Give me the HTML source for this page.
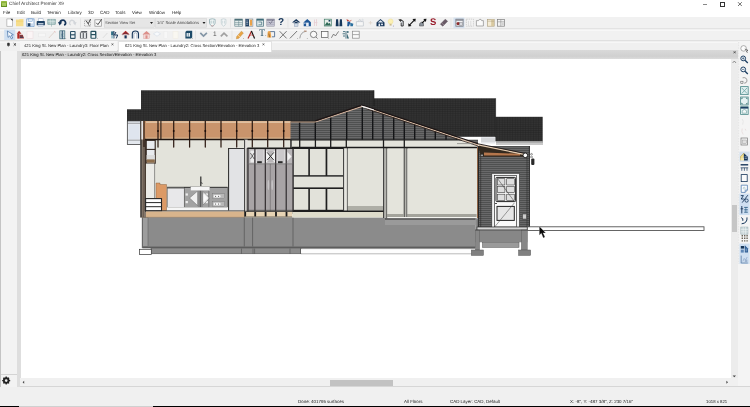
<!DOCTYPE html>
<html><head><meta charset="utf-8"><title>Chief Architect Premier X9</title>
<style>
html,body{margin:0;padding:0;}
body{width:750px;height:407px;overflow:hidden;background:#fff;position:relative;font-family:"Liberation Sans",sans-serif;}
.abs{position:absolute;}
.t{position:absolute;white-space:nowrap;line-height:1;color:#333;will-change:transform;text-rendering:geometricPrecision;}
#house{position:absolute;left:0;top:0;}
</style></head><body>

<div class="abs" style="left:0px;top:0px;width:750px;height:17px;background:#fff;"></div>
<div class="abs" style="left:0px;top:17.4px;width:750px;height:12px;background:#f1f1f1;"></div>
<div class="abs" style="left:0px;top:29px;width:750px;height:11.5px;background:#f1f1f1;"></div>
<div class="abs" style="left:0px;top:27.9px;width:750px;height:0.8px;background:#e3e3e3;"></div>
<div class="abs" style="left:0px;top:29.6px;width:750px;height:1.2px;background:#f7f7f7;"></div>
<div class="abs" style="left:0px;top:40.5px;width:750px;height:10px;background:#f0f0f0;"></div>
<div class="abs" style="left:0px;top:40.1px;width:750px;height:0.8px;background:#e0e0e0;"></div>
<div class="abs" style="left:0px;top:41.8px;width:20px;height:1.2px;background:#f7f7f7;"></div>
<div class="abs" style="left:270px;top:41.8px;width:480px;height:1.2px;background:#f7f7f7;"></div>
<div class="abs" style="left:20.6px;top:50px;width:717.6px;height:9.3px;background:linear-gradient(#d9d9d9,#d0d0d0 70%,#dcdcdc);"></div>
<div class="abs" style="left:0px;top:50.5px;width:17.5px;height:337px;background:#f3f3f3;"></div>
<div class="abs" style="left:17.3px;top:50.5px;width:3.4px;height:336px;background:#dedede;"></div>
<div class="abs" style="left:0.8px;top:373.8px;width:16.5px;height:0.6px;background:#d4d4d4;"></div>
<div class="abs" style="left:0px;top:50.5px;width:0.8px;height:337px;background:#c4c4c4;"></div>
<div class="abs" style="left:738px;top:40.9px;width:12px;height:346px;background:#f4f4f4;"></div>
<div class="abs" style="left:730.8px;top:59.3px;width:7.2px;height:319px;background:#ececec;"></div>
<div class="abs" style="left:732px;top:205px;width:5px;height:27px;background:#c6c6c6;"></div>
<div class="abs" style="left:20px;top:378px;width:718px;height:8.5px;background:#f0f0f0;"></div>
<div class="abs" style="left:330px;top:379.9px;width:63.4px;height:6.3px;background:#c2c2c2;"></div>
<div class="abs" style="left:0px;top:386.5px;width:750px;height:20px;background:#f0f0f0;"></div>
<div class="abs" style="left:20px;top:386.3px;width:730px;height:0.7px;background:#d6d6d6;"></div>
<div class="abs" style="left:0px;top:406px;width:19px;height:1px;background:#000;"></div>
<div class="abs" style="left:153px;top:406px;width:597px;height:1px;background:#000;"></div>
<div class="abs" style="left:19px;top:406px;width:134px;height:1px;background:#d0d0d0;"></div>
<div class="abs" style="left:1px;top:1.2px;width:6px;height:6px;background:linear-gradient(#9bbf45,#5d8a1f);border-radius:0.5px;"></div>
<div class="abs" style="left:2.4px;top:3.2px;width:3.2px;height:2.6px;background:#a9cc5e;"></div>
<div class="t" style="left:9.3px;top:2.0px;font-size:4.7px;color:#333;">Chief Architect Premier X9</div>
<div class="abs" style="left:703px;top:4.1px;width:3.6px;height:0.6px;background:#888;"></div>
<div class="abs" style="left:720.2px;top:2.3px;width:2.8px;height:2.8px;border:0.7px solid #333;"></div>
<div class="t" style="left:3.3px;top:10.8px;font-size:4.5px;color:#222;">File</div>
<div class="t" style="left:16.6px;top:10.8px;font-size:4.5px;color:#222;">Edit</div>
<div class="t" style="left:30.6px;top:10.8px;font-size:4.5px;color:#222;">Build</div>
<div class="t" style="left:47.4px;top:10.8px;font-size:4.5px;color:#222;">Terrain</div>
<div class="t" style="left:67.8px;top:10.8px;font-size:4.5px;color:#222;">Library</div>
<div class="t" style="left:88.4px;top:10.8px;font-size:4.5px;color:#222;">3D</div>
<div class="t" style="left:99.6px;top:10.8px;font-size:4.5px;color:#222;">CAD</div>
<div class="t" style="left:115.2px;top:10.8px;font-size:4.5px;color:#222;">Tools</div>
<div class="t" style="left:132.2px;top:10.8px;font-size:4.5px;color:#222;">View</div>
<div class="t" style="left:148.6px;top:10.8px;font-size:4.5px;color:#222;">Window</div>
<div class="t" style="left:172.2px;top:10.8px;font-size:4.5px;color:#222;">Help</div>
<div class="abs" style="left:20px;top:41px;width:97px;height:9.5px;background:#f6f6f6;"></div>
<div class="abs" style="left:117.5px;top:41px;width:152px;height:9.7px;background:#ffffff;border-left:0.5px solid #e2e2e2;border-right:0.5px solid #e2e2e2;border-top:0.5px solid #e2e2e2;"></div>
<div class="t" style="left:24px;top:43.9px;font-size:4.2px;color:#222;">421 King St. New Plan - Laundry3: Floor Plan</div>
<div class="t" style="left:110.5px;top:43.2px;font-size:5px;color:#222;">&#215;</div>
<div class="t" style="left:125px;top:43.9px;font-size:4.2px;color:#222;">621 King St. New Plan - Laundry2: Cross Section/Elevation - Elevation 3</div>
<div class="t" style="left:262.4px;top:43.2px;font-size:5px;color:#222;">&#215;</div>
<div class="t" style="left:22px;top:52.7px;font-size:4.2px;color:#111;">621 King St. New Plan - Laundry2: Cross Section/Elevation - Elevation 3</div>
<div class="t" style="left:732.6px;top:51.2px;font-size:5.5px;color:#222;">&#215;</div>
<div class="t" style="left:298px;top:400.2px;font-size:4.45px;color:#222;">Done: 401795 surfaces</div>
<div class="t" style="left:404px;top:400.2px;font-size:4.45px;color:#222;">All Floors</div>
<div class="t" style="left:450px;top:400.2px;font-size:4.45px;color:#222;">CAD Layer: CAD, Default</div>
<div class="t" style="left:570px;top:400.2px;font-size:4.47px;color:#222;">X: -8", Y: -487 3/8", Z: 230 7/16"</div>
<div class="t" style="left:706px;top:400.2px;font-size:4.3px;color:#222;">1018 x 821</div>
<svg id="house" width="750" height="407" viewBox="0 0 750 407">
<defs>
<pattern id="roof" width="2.6" height="2.1" patternUnits="userSpaceOnUse">
<rect width="2.6" height="2.1" fill="#323232"/>
<path d="M0 0.2H2.6M0.2 0V2.1" stroke="#212121" stroke-width="0.5" fill="none"/>
</pattern>
<pattern id="siding" width="4" height="2" patternUnits="userSpaceOnUse">
<rect width="4" height="2" fill="#656667"/>
<path d="M0 0.4H4" stroke="#38393a" stroke-width="0.8"/><path d="M0 1H4" stroke="#78797a" stroke-width="0.35"/>
</pattern>
</defs>
<rect x="127.00" y="109.30" width="15.00" height="11.70" fill="url(#roof)" />
<rect x="141.00" y="90.30" width="233.00" height="46.70" fill="url(#roof)" />
<rect x="373.50" y="98.30" width="122.10" height="38.50" fill="url(#roof)" />
<rect x="495.30" y="116.80" width="47.40" height="24.60" fill="url(#roof)" />
<line x1="374.00" y1="90.30" x2="374.00" y2="106.00" stroke="#151515" stroke-width="0.6" />
<line x1="495.60" y1="98.30" x2="495.60" y2="141.00" stroke="#151515" stroke-width="0.6" />
<rect x="496.00" y="141.40" width="47.00" height="3.60" fill="#c9c9c9" />
<rect x="496.00" y="141.40" width="47.00" height="1.00" fill="#8a8a8a" />
<rect x="144.00" y="121.00" width="147.00" height="18.60" fill="#c9946c" />
<rect x="144.00" y="121.20" width="147.00" height="1.80" fill="#e0c0a0" />
<rect x="144.00" y="137.60" width="147.00" height="1.40" fill="#dcb894" />
<rect x="127.30" y="120.90" width="13.70" height="23.50" fill="#e4e8ee" stroke="#262626" stroke-width="0.7" />
<line x1="127.50" y1="123.30" x2="141.00" y2="123.30" stroke="#555" stroke-width="0.5" />
<line x1="127.50" y1="140.20" x2="141.00" y2="140.20" stroke="#555" stroke-width="0.5" />
<rect x="129.00" y="125.00" width="10.00" height="14.00" fill="#dfe5ee" />
<rect x="142.30" y="217.50" width="333.20" height="29.10" fill="#8b8b8b" />
<rect x="142.30" y="217.50" width="5.70" height="29.10" fill="#9d9d9d" />
<rect x="385.00" y="219.30" width="90.50" height="5.70" fill="#9a9a9a" />
<line x1="142.30" y1="217.50" x2="142.30" y2="248.00" stroke="#3a3a3a" stroke-width="0.7" />
<line x1="148.00" y1="217.50" x2="148.00" y2="246.00" stroke="#5a5a5a" stroke-width="0.5" />
<line x1="244.30" y1="217.50" x2="244.30" y2="246.60" stroke="#4a4a4a" stroke-width="0.6" />
<line x1="252.60" y1="217.50" x2="252.60" y2="246.60" stroke="#4a4a4a" stroke-width="0.6" />
<line x1="293.00" y1="217.50" x2="293.00" y2="246.60" stroke="#4a4a4a" stroke-width="0.6" />
<rect x="142.30" y="246.30" width="333.20" height="2.00" fill="#5c5c5c" />
<rect x="151.00" y="248.60" width="150.00" height="5.20" fill="#8c8c8c" stroke="#444" stroke-width="0.5" />
<rect x="301.00" y="248.80" width="174.00" height="4.80" fill="#fdfdfd" />
<line x1="301.00" y1="248.60" x2="475.00" y2="248.60" stroke="#444" stroke-width="0.5" />
<line x1="301.00" y1="253.80" x2="475.00" y2="253.80" stroke="#777" stroke-width="0.5" />
<line x1="241.50" y1="248.60" x2="241.50" y2="253.80" stroke="#444" stroke-width="0.5" />
<line x1="253.00" y1="248.60" x2="253.00" y2="253.80" stroke="#444" stroke-width="0.5" />
<line x1="254.60" y1="248.60" x2="254.60" y2="253.80" stroke="#444" stroke-width="0.5" />
<line x1="290.00" y1="248.60" x2="290.00" y2="253.80" stroke="#444" stroke-width="0.5" />
<line x1="300.50" y1="248.60" x2="300.50" y2="253.80" stroke="#444" stroke-width="0.5" />
<rect x="139.50" y="249.30" width="11.80" height="5.10" fill="#fff" stroke="#333" stroke-width="0.7" />
<rect x="146.00" y="139.60" width="332.00" height="71.40" fill="#e3e3db" />
<rect x="387.00" y="205.00" width="91.00" height="13.00" fill="#e3e3db" />
<rect x="140.40" y="120.90" width="5.60" height="96.60" fill="#85786c" />
<line x1="141.00" y1="120.90" x2="141.00" y2="217.50" stroke="#262626" stroke-width="1.1" />
<line x1="145.20" y1="139.00" x2="145.20" y2="211.00" stroke="#2e221a" stroke-width="1.0" />
<line x1="143.30" y1="121.00" x2="143.30" y2="217.00" stroke="#4a3c32" stroke-width="0.5" />
<rect x="141.60" y="121.00" width="4.40" height="18.40" fill="#c9946c" />
<rect x="141.40" y="121.00" width="1.80" height="18.40" fill="#e4e4e6" />
<line x1="144.00" y1="121.00" x2="144.00" y2="147.00" stroke="#2e1c14" stroke-width="1.3" />
<line x1="158.00" y1="121.00" x2="158.00" y2="147.00" stroke="#2e1c14" stroke-width="1.25" stroke-linecap="round"/>
<circle cx="158" cy="131" r="0.95" fill="#1a0c08"/>
<line x1="173.70" y1="121.00" x2="173.70" y2="147.00" stroke="#2e1c14" stroke-width="1.25" stroke-linecap="round"/>
<circle cx="173.7" cy="131" r="0.95" fill="#1a0c08"/>
<line x1="189.60" y1="121.00" x2="189.60" y2="147.00" stroke="#2e1c14" stroke-width="1.25" stroke-linecap="round"/>
<circle cx="189.6" cy="131" r="0.95" fill="#1a0c08"/>
<line x1="205.30" y1="121.00" x2="205.30" y2="147.00" stroke="#2e1c14" stroke-width="1.25" stroke-linecap="round"/>
<circle cx="205.3" cy="131" r="0.95" fill="#1a0c08"/>
<line x1="221.00" y1="121.00" x2="221.00" y2="147.00" stroke="#2e1c14" stroke-width="1.25" stroke-linecap="round"/>
<circle cx="221" cy="131" r="0.95" fill="#1a0c08"/>
<line x1="236.70" y1="121.00" x2="236.70" y2="147.00" stroke="#2e1c14" stroke-width="1.25" stroke-linecap="round"/>
<circle cx="236.7" cy="131" r="0.95" fill="#1a0c08"/>
<line x1="252.30" y1="121.00" x2="252.30" y2="147.00" stroke="#2e1c14" stroke-width="1.25" stroke-linecap="round"/>
<circle cx="252.3" cy="131" r="0.95" fill="#1a0c08"/>
<line x1="267.70" y1="121.00" x2="267.70" y2="147.00" stroke="#2e1c14" stroke-width="1.25" stroke-linecap="round"/>
<circle cx="267.7" cy="131" r="0.95" fill="#1a0c08"/>
<line x1="283.70" y1="121.00" x2="283.70" y2="147.00" stroke="#2e1c14" stroke-width="1.25" stroke-linecap="round"/>
<circle cx="283.7" cy="131" r="0.95" fill="#1a0c08"/>
<line x1="160.90" y1="120.90" x2="160.90" y2="139.50" stroke="#33241c" stroke-width="1.2" />
<line x1="145.00" y1="139.50" x2="291.00" y2="139.50" stroke="#1e1612" stroke-width="1.5" />
<rect x="146.20" y="140.30" width="9.00" height="22.90" fill="#e9ebee" stroke="#2a1c14" stroke-width="1.1" />
<line x1="146.20" y1="149.40" x2="155.20" y2="149.40" stroke="#2a1c14" stroke-width="1.0" />
<rect x="146.60" y="155.00" width="8.20" height="5.00" fill="#dcdcdc" />
<rect x="146.70" y="159.40" width="8.00" height="3.30" fill="#8e6e4c" />
<rect x="146.20" y="163.60" width="8.10" height="34.40" fill="#ebebe7" />
<line x1="154.60" y1="163.60" x2="154.60" y2="198.00" stroke="#555" stroke-width="0.6" />
<polygon points="156.00,183.00 160.00,183.00 160.00,184.50 166.50,184.50 166.50,210.50 156.00,210.50" fill="#dc9a66" stroke="#7a5030" stroke-width="0.4" />
<rect x="145.60" y="198.60" width="15.90" height="12.20" fill="#fff" stroke="#262626" stroke-width="1.1" />
<line x1="145.60" y1="202.60" x2="161.50" y2="202.60" stroke="#262626" stroke-width="1.0" />
<line x1="145.60" y1="206.70" x2="161.50" y2="206.70" stroke="#262626" stroke-width="1.0" />
<rect x="167.40" y="188.20" width="16.80" height="19.20" fill="#e8e8ea" stroke="#555" stroke-width="0.5" />
<rect x="184.40" y="187.60" width="43.20" height="19.80" fill="#a2a2a2" stroke="#444" stroke-width="0.5" />
<rect x="185.60" y="193.40" width="2.30" height="2.20" fill="#ededed" />
<rect x="185.60" y="201.00" width="2.30" height="2.20" fill="#ededed" />
<rect x="205.60" y="193.40" width="2.30" height="2.20" fill="#ededed" />
<rect x="205.60" y="201.00" width="2.30" height="2.20" fill="#ededed" />
<polygon points="189.60,198.00 197.60,191.00 197.60,205.60" fill="#efefef" stroke="#555" stroke-width="0.4" />
<polygon points="209.60,198.00 203.00,191.60 203.00,205.00" fill="#efefef" stroke="#555" stroke-width="0.4" />
<rect x="197.80" y="190.00" width="5.00" height="17.00" fill="#8a8a8a" />
<line x1="200.40" y1="188.00" x2="200.40" y2="207.00" stroke="#444" stroke-width="0.7" />
<polygon points="203.40,194.00 207.40,198.00 203.40,202.00" fill="#fafafa" />
<line x1="208.80" y1="187.60" x2="208.80" y2="207.40" stroke="#555" stroke-width="0.5" />
<rect x="212.60" y="193.80" width="12.00" height="4.80" fill="#b8b8b8" stroke="#666" stroke-width="0.3" />
<rect x="213.60" y="194.90" width="7.00" height="2.60" fill="#f4f4f4" rx="1.2"/>
<circle cx="215.6" cy="196.2" r="0.55" fill="#333"/>
<circle cx="218.6" cy="196.2" r="0.55" fill="#333"/>
<rect x="212.60" y="201.60" width="12.00" height="4.80" fill="#b8b8b8" stroke="#666" stroke-width="0.3" />
<rect x="213.60" y="202.70" width="7.00" height="2.60" fill="#f4f4f4" rx="1.2"/>
<circle cx="215.6" cy="204.0" r="0.55" fill="#333"/>
<circle cx="218.6" cy="204.0" r="0.55" fill="#333"/>
<rect x="167.00" y="207.40" width="77.00" height="3.10" fill="#f6f6f6" />
<line x1="167.00" y1="187.30" x2="227.60" y2="187.30" stroke="#2a2a2a" stroke-width="0.9" />
<rect x="190.70" y="186.80" width="19.10" height="3.80" fill="#f6f6f6" stroke="#999" stroke-width="0.3" />
<line x1="200.80" y1="176.50" x2="200.80" y2="186.00" stroke="#2a2a2a" stroke-width="1.2" />
<line x1="200.80" y1="182.60" x2="202.60" y2="183.40" stroke="#2a2a2a" stroke-width="0.8" />
<rect x="228.60" y="148.50" width="15.40" height="62.00" fill="#e2e3e5" />
<line x1="228.60" y1="148.20" x2="228.60" y2="210.50" stroke="#262626" stroke-width="1.0" />
<line x1="228.20" y1="148.50" x2="244.50" y2="148.50" stroke="#262626" stroke-width="0.9" />
<rect x="244.20" y="139.60" width="3.40" height="77.40" fill="#e2e0dc" />
<line x1="244.60" y1="139.60" x2="244.60" y2="217.00" stroke="#262626" stroke-width="0.9" />
<line x1="247.20" y1="148.00" x2="247.20" y2="217.00" stroke="#262626" stroke-width="0.9" />
<rect x="247.40" y="148.00" width="45.80" height="66.00" fill="#a8a4a6" />
<rect x="248.00" y="148.60" width="45.00" height="15.20" fill="#b9b6b8" />
<rect x="250.40" y="150.50" width="3.80" height="12.00" fill="#ececec" />
<line x1="250.40" y1="153.00" x2="254.20" y2="159.00" stroke="#3a3a3a" stroke-width="0.7" />
<line x1="250.40" y1="159.00" x2="254.20" y2="153.00" stroke="#3a3a3a" stroke-width="0.7" />
<rect x="255.60" y="150.00" width="9.00" height="13.20" fill="#f0f0f0" />
<rect x="256.50" y="150.00" width="7.20" height="13.20" fill="#cbc9cb" />
<rect x="257.20" y="161.20" width="4.60" height="2.00" fill="#2a2a2a" />
<rect x="276.40" y="150.00" width="9.10" height="13.20" fill="#f0f0f0" />
<rect x="277.30" y="150.00" width="7.30" height="13.20" fill="#cbc9cb" />
<rect x="278.00" y="161.20" width="4.60" height="2.00" fill="#2a2a2a" />
<rect x="266.00" y="150.50" width="9.00" height="12.00" fill="#f2f2f2" />
<polygon points="266.60,150.50 274.40,150.50 270.50,155.60" fill="#b9b6b8" />
<polygon points="266.60,162.50 274.40,162.50 270.50,157.00" fill="#b9b6b8" />
<line x1="267.20" y1="152.40" x2="273.80" y2="160.20" stroke="#2a2a2a" stroke-width="1.0" />
<line x1="267.20" y1="160.20" x2="273.80" y2="152.40" stroke="#2a2a2a" stroke-width="1.0" />
<polygon points="287.40,152.00 291.60,156.50 287.40,161.00" fill="#f2f2f2" />
<line x1="248.00" y1="148.00" x2="248.00" y2="214.00" stroke="#262224" stroke-width="1.1" />
<line x1="254.90" y1="148.00" x2="254.90" y2="214.00" stroke="#262224" stroke-width="1.1" />
<line x1="265.30" y1="148.00" x2="265.30" y2="214.00" stroke="#262224" stroke-width="1.1" />
<line x1="275.70" y1="148.00" x2="275.70" y2="214.00" stroke="#262224" stroke-width="1.1" />
<line x1="286.20" y1="148.00" x2="286.20" y2="214.00" stroke="#262224" stroke-width="1.1" />
<line x1="293.00" y1="148.00" x2="293.00" y2="214.00" stroke="#262224" stroke-width="1.1" />
<line x1="270.30" y1="164.00" x2="270.30" y2="212.00" stroke="#6a6668" stroke-width="0.6" />
<line x1="247.40" y1="148.20" x2="293.40" y2="148.20" stroke="#1c1c1c" stroke-width="1.4" />
<line x1="247.40" y1="163.90" x2="293.40" y2="163.90" stroke="#6a6668" stroke-width="0.6" />
<line x1="247.40" y1="210.30" x2="293.40" y2="210.30" stroke="#4a4a4a" stroke-width="0.7" />
<ellipse cx="268.4" cy="185" rx="0.8" ry="5" fill="#c6c4c6"/>
<ellipse cx="272.2" cy="185" rx="0.8" ry="5" fill="#c6c4c6"/>
<line x1="145.00" y1="211.00" x2="244.50" y2="211.00" stroke="#262626" stroke-width="1.0" />
<rect x="146.00" y="211.50" width="98.40" height="5.80" fill="#d8b48c" />
<line x1="142.00" y1="217.40" x2="244.40" y2="217.40" stroke="#5a4a3a" stroke-width="0.5" />
<rect x="244.40" y="211.50" width="47.90" height="5.80" fill="#e6d3b4" />
<rect x="244.30" y="212.00" width="1.80" height="4.50" fill="#1a1a1a" />
<rect x="254.30" y="212.00" width="1.80" height="4.50" fill="#1a1a1a" />
<rect x="264.70" y="212.00" width="1.80" height="4.50" fill="#1a1a1a" />
<rect x="275.10" y="212.00" width="1.80" height="4.50" fill="#1a1a1a" />
<rect x="285.60" y="212.00" width="1.80" height="4.50" fill="#1a1a1a" />
<line x1="244.00" y1="211.30" x2="292.30" y2="211.30" stroke="#262626" stroke-width="0.9" />
<line x1="244.00" y1="217.00" x2="292.30" y2="217.00" stroke="#3a3a3a" stroke-width="0.7" />
<rect x="293.20" y="148.00" width="50.40" height="63.00" fill="#1f1f1f" />
<rect x="293.80" y="149.00" width="14.50" height="26.20" fill="#e2e2da" />
<rect x="293.80" y="189.00" width="14.50" height="20.80" fill="#e2e2da" />
<rect x="309.90" y="149.00" width="15.70" height="26.20" fill="#e2e2da" />
<rect x="309.90" y="189.00" width="15.70" height="20.80" fill="#e2e2da" />
<rect x="327.30" y="149.00" width="15.90" height="26.20" fill="#e2e2da" />
<rect x="327.30" y="189.00" width="15.90" height="20.80" fill="#e2e2da" />
<rect x="293.80" y="176.60" width="49.40" height="10.80" fill="#e2e2da" />
<rect x="343.80" y="148.60" width="3.40" height="62.40" fill="#e6e6e0" />
<line x1="343.60" y1="148.00" x2="343.60" y2="211.00" stroke="#262626" stroke-width="0.8" />
<line x1="347.40" y1="148.00" x2="347.40" y2="211.00" stroke="#262626" stroke-width="0.8" />
<rect x="347.80" y="148.60" width="35.80" height="57.40" fill="#e3e3db" />
<rect x="347.80" y="206.00" width="35.80" height="4.60" fill="#aeaea6" />
<rect x="292.30" y="211.60" width="91.70" height="5.70" fill="#dedccb" />
<line x1="292.30" y1="211.20" x2="384.00" y2="211.20" stroke="#1e1e1e" stroke-width="1.4" />
<rect x="383.60" y="140.00" width="3.40" height="78.00" fill="#b4b4ae" />
<line x1="383.60" y1="140.00" x2="383.60" y2="218.00" stroke="#262626" stroke-width="0.9" />
<line x1="386.90" y1="140.00" x2="386.90" y2="218.00" stroke="#262626" stroke-width="0.8" />
<rect x="387.30" y="148.60" width="16.70" height="65.40" fill="#e4e4dc" />
<rect x="404.00" y="148.00" width="3.20" height="70.00" fill="#b4b4ae" />
<line x1="404.20" y1="140.00" x2="404.20" y2="218.00" stroke="#262626" stroke-width="0.8" />
<line x1="407.00" y1="140.00" x2="407.00" y2="218.00" stroke="#262626" stroke-width="0.8" />
<rect x="407.40" y="148.60" width="69.20" height="65.40" fill="#e4e4dc" />
<rect x="387.30" y="214.00" width="16.70" height="3.00" fill="#a4a49c" />
<rect x="407.40" y="214.00" width="69.20" height="3.00" fill="#a4a49c" />
<rect x="387.30" y="217.00" width="89.30" height="1.30" fill="#f4f4f0" />
<line x1="385.00" y1="219.00" x2="476.60" y2="219.00" stroke="#262626" stroke-width="0.9" />
<line x1="291.00" y1="139.60" x2="291.00" y2="148.00" stroke="#262626" stroke-width="1.0" />
<line x1="299.70" y1="139.60" x2="299.70" y2="148.00" stroke="#262626" stroke-width="1.0" />
<line x1="315.40" y1="139.60" x2="315.40" y2="148.00" stroke="#262626" stroke-width="1.0" />
<line x1="330.70" y1="139.60" x2="330.70" y2="148.00" stroke="#262626" stroke-width="1.0" />
<line x1="346.30" y1="139.60" x2="346.30" y2="148.00" stroke="#262626" stroke-width="1.0" />
<polygon points="290.50,121.80 315.30,121.80 362.00,106.00 478.00,144.60 478.00,139.80 290.50,139.80" fill="url(#siding)" />
<rect x="290.50" y="121.80" width="187.50" height="18.00" fill="none" />
<line x1="299.60" y1="122.00" x2="299.60" y2="139.80" stroke="#141517" stroke-width="1.4" />
<line x1="315.30" y1="121.80" x2="315.30" y2="139.80" stroke="#141517" stroke-width="1.4" />
<line x1="330.70" y1="116.59" x2="330.70" y2="139.80" stroke="#141517" stroke-width="1.4" />
<line x1="346.70" y1="111.18" x2="346.70" y2="139.80" stroke="#141517" stroke-width="1.4" />
<line x1="362.30" y1="106.10" x2="362.30" y2="139.80" stroke="#141517" stroke-width="1.4" />
<line x1="372.70" y1="109.62" x2="372.70" y2="139.80" stroke="#141517" stroke-width="1.4" />
<line x1="383.00" y1="113.10" x2="383.00" y2="139.80" stroke="#141517" stroke-width="1.4" />
<line x1="393.70" y1="116.71" x2="393.70" y2="139.80" stroke="#141517" stroke-width="1.4" />
<line x1="404.30" y1="120.29" x2="404.30" y2="139.80" stroke="#141517" stroke-width="1.4" />
<line x1="414.70" y1="123.81" x2="414.70" y2="139.80" stroke="#141517" stroke-width="1.4" />
<line x1="425.00" y1="127.29" x2="425.00" y2="139.80" stroke="#141517" stroke-width="1.4" />
<line x1="435.30" y1="130.77" x2="435.30" y2="139.80" stroke="#141517" stroke-width="1.4" />
<line x1="446.00" y1="134.38" x2="446.00" y2="139.80" stroke="#141517" stroke-width="1.4" />
<line x1="456.50" y1="137.93" x2="456.50" y2="139.80" stroke="#141517" stroke-width="1.4" />
<polygon points="290.50,139.90 462.00,139.90 478.00,145.00 478.00,147.20 290.50,147.20" fill="#e3e3db" />
<line x1="291.00" y1="139.80" x2="291.00" y2="148.00" stroke="#1c1c1c" stroke-width="1.3" />
<line x1="299.70" y1="139.80" x2="299.70" y2="148.00" stroke="#1c1c1c" stroke-width="1.3" />
<line x1="315.40" y1="139.80" x2="315.40" y2="148.00" stroke="#1c1c1c" stroke-width="1.3" />
<line x1="330.70" y1="139.80" x2="330.70" y2="148.00" stroke="#1c1c1c" stroke-width="1.3" />
<line x1="346.30" y1="139.80" x2="346.30" y2="148.00" stroke="#1c1c1c" stroke-width="1.3" />
<line x1="383.50" y1="139.80" x2="383.50" y2="148.00" stroke="#1c1c1c" stroke-width="1.3" />
<line x1="404.30" y1="139.80" x2="404.30" y2="148.00" stroke="#1c1c1c" stroke-width="1.3" />
<line x1="290.50" y1="139.80" x2="462.00" y2="139.80" stroke="#1a1a1a" stroke-width="1.2" />
<line x1="292.00" y1="147.60" x2="478.00" y2="147.60" stroke="#1c1c1c" stroke-width="1.5" />
<line x1="290.50" y1="121.90" x2="315.30" y2="121.90" stroke="#c9a58a" stroke-width="1.2" />
<line x1="290.50" y1="121.00" x2="315.30" y2="121.00" stroke="#1c1c1c" stroke-width="0.7" />
<line x1="315.30" y1="122.00" x2="362.00" y2="106.30" stroke="#d2b29c" stroke-width="1.3" />
<line x1="315.30" y1="120.90" x2="362.00" y2="105.10" stroke="#1c1414" stroke-width="1.2" />
<line x1="362.00" y1="106.20" x2="478.00" y2="144.80" stroke="#dcc0a8" stroke-width="1.3" />
<line x1="362.00" y1="105.10" x2="478.00" y2="143.70" stroke="#1c1414" stroke-width="1.2" />
<line x1="366.00" y1="108.60" x2="478.00" y2="146.00" stroke="#2e201a" stroke-width="0.8" />
<polygon points="361.00,105.60 365.00,106.60 374.00,109.60 374.00,110.60 362.00,107.00" fill="#f4f4f4" />
<line x1="473.40" y1="143.60" x2="457.00" y2="143.60" stroke="#8a8a86" stroke-width="0.8" />
<rect x="481.00" y="137.00" width="14.40" height="6.50" fill="#e4e6ea" />
<line x1="481.00" y1="139.00" x2="495.40" y2="139.00" stroke="#999" stroke-width="0.4" />
<line x1="481.00" y1="141.00" x2="495.40" y2="141.00" stroke="#999" stroke-width="0.4" />
<rect x="478.30" y="146.00" width="51.30" height="83.00" fill="url(#siding)" />
<line x1="478.30" y1="146.00" x2="478.30" y2="229.00" stroke="#1e1e1e" stroke-width="0.9" />
<line x1="529.40" y1="146.00" x2="529.40" y2="229.00" stroke="#1e1e1e" stroke-width="0.9" />
<line x1="480.70" y1="156.00" x2="480.70" y2="229.00" stroke="#2a2a2a" stroke-width="0.6" />
<line x1="527.00" y1="156.00" x2="527.00" y2="229.00" stroke="#2a2a2a" stroke-width="0.6" />
<rect x="477.00" y="147.00" width="1.00" height="71.00" fill="#a87450" />
<polygon points="479.00,145.00 525.00,154.20 525.00,156.80 481.00,156.80 479.00,150.00" fill="#33291f" />
<polygon points="484.00,152.50 520.00,153.80 520.00,155.60 484.00,155.60" fill="#b5764c" />
<line x1="478.00" y1="144.80" x2="525.00" y2="154.40" stroke="#e6cdb2" stroke-width="1.5" />
<line x1="478.00" y1="143.80" x2="525.00" y2="153.40" stroke="#1c1414" stroke-width="0.9" />
<circle cx="525.3" cy="155.3" r="2.3" fill="#fff" stroke="#1a1a1a" stroke-width="0.9"/>
<circle cx="482" cy="155.3" r="1.1" fill="#ddd" stroke="#1a1a1a" stroke-width="0.5"/>
<rect x="531.20" y="158.50" width="3.20" height="6.50" fill="#2a2a2a" rx="1"/>
<line x1="530.00" y1="157.00" x2="533.00" y2="157.00" stroke="#333" stroke-width="0.7" />
<circle cx="531.5" cy="154.3" r="0.9" fill="#fff" stroke="#333" stroke-width="0.5"/>
<rect x="491.80" y="173.40" width="27.60" height="53.80" fill="#f2f2f2" stroke="#333" stroke-width="0.6" />
<rect x="494.60" y="175.60" width="22.00" height="51.40" fill="#fafafa" stroke="#333" stroke-width="0.7" />
<rect x="496.00" y="177.40" width="19.60" height="24.20" fill="#fbfbfb" stroke="#222" stroke-width="1.0" rx="0.8"/>
<rect x="497.30" y="178.70" width="7.60" height="6.30" fill="#dedede" stroke="#3a3a3a" stroke-width="0.6" />
<rect x="497.30" y="186.60" width="7.60" height="6.00" fill="#dedede" stroke="#3a3a3a" stroke-width="0.6" />
<rect x="497.30" y="194.20" width="7.60" height="6.10" fill="#dedede" stroke="#3a3a3a" stroke-width="0.6" />
<rect x="506.70" y="178.70" width="7.60" height="6.30" fill="#dedede" stroke="#3a3a3a" stroke-width="0.6" />
<rect x="506.70" y="186.60" width="7.60" height="6.00" fill="#dedede" stroke="#3a3a3a" stroke-width="0.6" />
<rect x="506.70" y="194.20" width="7.60" height="6.10" fill="#dedede" stroke="#3a3a3a" stroke-width="0.6" />
<rect x="497.00" y="206.40" width="17.30" height="14.00" fill="#e6e6e6" stroke="#222" stroke-width="1.0" />
<line x1="497.50" y1="178.50" x2="514.00" y2="201.00" stroke="#333" stroke-width="0.5" />
<line x1="514.30" y1="203.00" x2="494.60" y2="227.00" stroke="#444" stroke-width="0.5" />
<line x1="495.00" y1="203.50" x2="497.00" y2="203.50" stroke="#222" stroke-width="0.8" />
<rect x="522.50" y="214.00" width="4.00" height="5.00" fill="#ccc" stroke="#333" stroke-width="0.5" />
<rect x="475.40" y="218.50" width="3.20" height="11.70" fill="#8a8a8a" />
<line x1="478.30" y1="146.00" x2="478.30" y2="229.00" stroke="#1e1e1e" stroke-width="0.9" />
<rect x="477.00" y="227.00" width="50.30" height="3.20" fill="#d4d4d4" stroke="#333" stroke-width="0.7" />
<rect x="527.30" y="226.80" width="176.70" height="3.70" fill="#fff" stroke="#4a4a4a" stroke-width="0.85" />
<rect x="475.40" y="230.00" width="51.90" height="12.30" fill="#878787" />
<rect x="475.40" y="230.00" width="4.20" height="20.00" fill="#878787" stroke="#555" stroke-width="0.4" />
<rect x="521.30" y="230.00" width="6.00" height="20.00" fill="#878787" stroke="#555" stroke-width="0.4" />
<rect x="482.50" y="242.30" width="36.50" height="5.10" fill="#9a9a9a" stroke="#555" stroke-width="0.5" />
<rect x="471.30" y="250.00" width="12.10" height="5.40" fill="#808080" stroke="#555" stroke-width="0.5" />
<rect x="518.60" y="250.00" width="12.00" height="5.40" fill="#808080" stroke="#555" stroke-width="0.5" />
<line x1="475.40" y1="230.00" x2="527.30" y2="230.00" stroke="#333" stroke-width="0.7" />
<polygon points="539.30,226.30 539.30,235.20 541.30,233.30 543.30,237.90 545.00,237.10 543.10,232.90 545.80,232.90" fill="#0a0a0a" stroke="#fff" stroke-width="0.25" />
</svg>
<svg id="icons" width="750" height="407" viewBox="0 0 750 407" style="position:absolute;left:0;top:0">
<g transform="translate(6.5,18.6)" opacity="1.0"><path d="M0.3 0.3H4.2L6 2V7.8H0.3Z" fill="#fff" stroke="#9a9a9a" stroke-width="0.6"/><path d="M4 0.2L6.2 2.3V0.2Z" fill="#222"/></g>
<g transform="translate(16,18.6)" opacity="1.0"><path d="M0 1H3L3.6 0.3H7.4V7.6H0Z" fill="#f6dd8c"/><path d="M0 2.6H7.4" stroke="#ecc95e" stroke-width="0.5"/></g>
<g transform="translate(26.5,18.6)" opacity="1.0"><rect x="0.3" y="0.3" width="7.2" height="7.4" fill="#fff" stroke="#5b8bc4" stroke-width="0.7"/><rect x="1.8" y="0.3" width="4" height="2.6" fill="#dfe9f5" stroke="#5b8bc4" stroke-width="0.4"/><rect x="1.2" y="4.6" width="2.8" height="3" fill="#1d3f63"/><rect x="4.4" y="4.8" width="2.4" height="2.8" fill="#c9d9ee"/></g>
<g transform="translate(36.5,18.6)" opacity="1.0"><rect x="1.8" y="0.2" width="4.8" height="3" fill="#fff" stroke="#7c93b5" stroke-width="0.4"/><path d="M0.2 3.2Q0.2 2.4 1 2.4H7.6Q8.4 2.4 8.4 3.2V6.6H0.2Z" fill="#1d3f63"/><rect x="1.6" y="4.6" width="5.4" height="1.2" fill="#dfe6f0"/><rect x="1.5" y="6.4" width="5.6" height="1.4" fill="#e8edf5" stroke="#7c93b5" stroke-width="0.3"/></g>
<g transform="translate(47.5,18.6)" opacity="1.0"><rect x="0.3" y="0.6" width="7.6" height="5.2" fill="#a9c3c3" stroke="#6d9393" stroke-width="0.5"/><path d="M2.8 0.6V5.8M5.4 0.6V5.8M0.3 3H7.9" stroke="#e6f0f0" stroke-width="0.5"/><path d="M4 5.8V8" stroke="#8aa" stroke-width="0.6"/></g>
<g transform="translate(58,18.6)" opacity="1.0"><path d="M2.3 5.2A2.7 2.7 0 1 1 6.2 6.6" fill="none" stroke="#17365a" stroke-width="1.7"/><path d="M0 3.4L4.2 3.8L1.6 7Z" fill="#17365a"/></g>
<g transform="translate(69,18.6)" opacity="1.0"><path d="M5.4 5.2A2.5 2.5 0 1 0 1.8 6.4" fill="none" stroke="#d3d6da" stroke-width="1.3"/><path d="M7.6 3.4L3.8 3.8L6.2 6.8Z" fill="#d3d6da"/></g>
<path d="M80.5 18.5V27.5" stroke="#dcdcdc" stroke-width="0.6"/>
<g transform="translate(84,18.6)" opacity="1.0"><rect x="0.5" y="1.5" width="6" height="6" fill="none" stroke="#888" stroke-width="0.6" stroke-dasharray="1.2 0.8"/><path d="M2 2L4.2 5.2L6.6 0.4" fill="none" stroke="#333" stroke-width="0.9"/><path d="M4.2 5.2L5.5 7.6" stroke="#555" stroke-width="0.7"/></g>
<g transform="translate(94.5,18.6)" opacity="1.0"><rect x="0.4" y="1.2" width="6.4" height="6.4" fill="#fafafa" stroke="#8a8a8a" stroke-width="0.7"/><path d="M1.8 4.2L3.4 6L7.2 0.6" fill="none" stroke="#333" stroke-width="0.9"/></g>
<rect x="104.2" y="18.6" width="50" height="8.6" fill="#e6e6e6" stroke="#cfcfcf" stroke-width="0.5"/>
<path d="M150 22L153 22L151.5 24Z" fill="#222"/>
<rect x="155.6" y="18.6" width="51" height="8.6" fill="#e6e6e6" stroke="#cfcfcf" stroke-width="0.5"/>
<path d="M202.5 22L205.5 22L204 24Z" fill="#222"/>
<g transform="translate(208.5,18.6)" opacity="1.0"><path d="M1 0.8Q3.7 -0.4 6.6 0.8V4.6Q5.6 7.2 3.8 7.8Q2 7.2 1 4.6Z" fill="#f4f8f8" stroke="#7fa1a6" stroke-width="0.7"/><path d="M2.6 2V5M4.8 2V5" stroke="#7fa1a6" stroke-width="0.6"/><path d="M2.6 7.2L5 7.2" stroke="#c77" stroke-width="0.5"/></g>
<g transform="translate(220.5,18.6)" opacity="1.0"><path d="M0.8 0.8Q3 -0.2 5.4 0.8V4.6Q4.6 7 3.1 7.6Q1.6 7 0.8 4.6Z" fill="#f6f8f9" stroke="#b9c9cd" stroke-width="0.7"/><path d="M2.2 2V5M4 2V5" stroke="#b9c9cd" stroke-width="0.6"/></g>
<path d="M230.5 18.5V27.5" stroke="#dcdcdc" stroke-width="0.6"/>
<g transform="translate(234.5,18.6)" opacity="1.0"><rect x="0.3" y="0.4" width="7.6" height="7.2" fill="#e4ecec" stroke="#5d7f86" stroke-width="0.6"/><rect x="0.3" y="0.4" width="7.6" height="1.6" fill="#4d6f78"/><path d="M0.3 4H7.9M0.3 5.8H7.9M4.2 2V7.6" stroke="#5d7f86" stroke-width="0.5"/></g>
<g transform="translate(245,18.6)" opacity="1.0"><rect x="0.3" y="0.4" width="7.6" height="7.2" fill="#f2ead8" stroke="#5d6f86" stroke-width="0.5"/><rect x="0.6" y="0.6" width="3.4" height="7" fill="#1d3f63"/><rect x="5" y="1.2" width="2" height="5.8" fill="#e9a24a"/><path d="M1.2 2.4H3.2M1.2 4H3.2M1.2 5.6H3.2" stroke="#dfe6f0" stroke-width="0.6"/></g>
<g transform="translate(256.5,18.6)" opacity="1.0"><rect x="0.3" y="0.4" width="6.6" height="7.2" fill="#e4ecec" stroke="#3d6a78" stroke-width="0.7"/><rect x="0.3" y="0.4" width="6.6" height="1.6" fill="#3d6a78"/><path d="M2 3.4H5.2V6.2H2" fill="none" stroke="#3d6a78" stroke-width="0.7"/></g>
<g transform="translate(266.5,18.6)" opacity="1.0"><rect x="0.3" y="0.4" width="7.6" height="7.2" fill="#c9c9d6" stroke="#8a8a9a" stroke-width="0.5"/><rect x="0.3" y="0.4" width="7.6" height="1.8" fill="#8a8a9c"/><path d="M0.3 4H7.9M0.3 5.8H7.9" stroke="#9a9aac" stroke-width="0.5"/><path d="M2.4 3.2L4 5L6.4 1.4" stroke="#6a6a80" stroke-width="0.7" fill="none"/></g>
<path d="M288 18.5V27.5" stroke="#dcdcdc" stroke-width="0.6"/>
<g transform="translate(292,18.6)" opacity="1.0"><path d="M0 4L4.2 0.4L8.4 4H6.6L4.2 2.4L1.8 4Z" fill="#17365a"/><path d="M1.4 4.6L4.2 2.8L7 4.6Z" fill="#17365a"/><rect x="2.4" y="5.2" width="3.6" height="2.4" fill="#cfd9e6" stroke="#6e86a4" stroke-width="0.4"/></g>
<g transform="translate(303.5,18.6)" opacity="1.0"><path d="M0.2 3.6L3.8 0.4L7.4 3.6V7.6H0.2Z" fill="#1f5796"/><rect x="2.6" y="4" width="2.6" height="3.6" fill="#e8eef6"/><rect x="0.8" y="3.8" width="1.2" height="1.6" fill="#bcd0ea"/></g>
<g transform="translate(313.5,18.6)" opacity="1.0"><path d="M1 1V7.4M3 0.6V7.4M0.4 4H4" stroke="#e6cdd2" stroke-width="0.8"/></g>
<g transform="translate(324,18.6)" opacity="1.0"><rect x="0.3" y="0.6" width="7" height="6.8" fill="#e6efe9" stroke="#3f7a66" stroke-width="0.7"/><path d="M0.6 6.8L3 3.4L4.6 5.2L5.6 4.2L7 6.8Z" fill="#2f6a58"/><rect x="4.6" y="1.4" width="1.8" height="1.6" fill="#1d3f63"/></g>
<g transform="translate(335.5,18.6)" opacity="1.0"><path d="M0.6 0.6H2.6L3 5.6L3.2 7.6H0.2Z" fill="#17365a"/><path d="M4.4 0.6H6.4L6.8 7.6H3.8L4 5.6Z" fill="#17365a"/></g>
<g transform="translate(346,18.6)" opacity="1.0"><path d="M0.4 0.6L3.4 1.6L1.4 3Z" fill="#c0392b"/><path d="M1.6 2.6L4.4 3.6L3 7.6H1.2Z" fill="#1f5796"/><path d="M4.2 4.2L7.4 5.2L6.8 7.6H4.4Z" fill="#2a6f9e"/><path d="M3 3L5.4 1.8" stroke="#c0392b" stroke-width="0.7"/></g>
<g transform="translate(356,18.6)" opacity="1.0"><path d="M0.4 3H7.4V7.4H0.4Z" fill="#f6f6f6" stroke="#b5bcc4" stroke-width="0.6"/><path d="M2 3L3.8 0.8L5.6 3" fill="none" stroke="#b5bcc4" stroke-width="0.6"/><circle cx="6.6" cy="1.4" r="0.8" fill="none" stroke="#c5ccd4" stroke-width="0.4"/></g>
<g transform="translate(368.5,18.6)" opacity="1.0"><path d="M2 2.4V6M0.2 4.2H3.8" stroke="#dfd6cc" stroke-width="0.8"/></g>
<g transform="translate(376.5,18.6)" opacity="1.0"><path d="M0 3.8L4 0.4L8 3.8V7.6H0Z" fill="#17365a"/><path d="M4 1.6L1.2 4H6.8Z" fill="#e8eef6"/><rect x="2" y="5" width="1.6" height="2.6" fill="#e8eef6"/><rect x="4.6" y="5" width="1.8" height="1.6" fill="#e8eef6"/></g>
<g transform="translate(388,18.6)" opacity="1.0"><circle cx="2.6" cy="2.8" r="2.5" fill="#fbf0b4" stroke="#ecdb8c" stroke-width="0.4"/><rect x="1.6" y="5.2" width="2" height="1.8" fill="#cdbd8d"/><circle cx="5.4" cy="7.4" r="0.5" fill="#8a8ac0"/></g>
<g transform="translate(398,18.6)" opacity="1.0"><path d="M0.4 1L3.6 0.6L2.8 3.4Z" fill="#111"/><path d="M2.6 1.6L5.2 2.4V7.4H3.2V4" fill="#e0e4ea" stroke="#111" stroke-width="0.8"/></g>
<g transform="translate(408,18.6)" opacity="1.0"><path d="M1.4 6.6L6.6 1.2" stroke="#111" stroke-width="1.1"/><path d="M4.4 0.4L7.8 0.2L7.2 3.4Z" fill="#111"/><path d="M0.2 4.6L0.4 7.8L3.6 7.4Z" fill="#111"/></g>
<g transform="translate(418.5,18.6)" opacity="1.0"><path d="M1 7.4Q0.4 4 3.4 3.4Q5.6 3.8 5 7.4Z" fill="#8d959e" stroke="#444" stroke-width="0.5"/><path d="M3.6 4.4L6.8 1.2" stroke="#111" stroke-width="1.1"/><path d="M4.8 0.4L8 0.2L7.4 3.4Z" fill="#111"/></g>
<g transform="translate(440,18.6)" opacity="1.0"><path d="M0.4 5.6L5.2 0.6L7.6 2.6L2.8 7.6Z" fill="#6a5a66" stroke="#4a3e48" stroke-width="0.4"/><path d="M1.8 4.4L4 6.4" stroke="#b9aab5" stroke-width="0.5"/></g>
<path d="M451 18.5V27.5" stroke="#dcdcdc" stroke-width="0.6"/>
<rect x="453.4" y="17.6" width="11" height="10.6" fill="#d5e1ef"/>
<g transform="translate(455.5,18.6)" opacity="1.0"><rect x="0.4" y="0.6" width="7.2" height="7" fill="#f2f2f4" stroke="#70747c" stroke-width="0.8"/><rect x="0.4" y="0.6" width="7.2" height="1.6" fill="#8b9099"/><circle cx="2.6" cy="5" r="1.6" fill="#8c2a2a"/><rect x="4.2" y="3.6" width="2.6" height="3.4" fill="#d9d9de" stroke="#70747c" stroke-width="0.4"/></g>
<g transform="translate(466,18.6)" opacity="1.0"><rect x="0.4" y="0.6" width="7" height="7" fill="#f5f5f5" stroke="#b9b9b9" stroke-width="0.6" stroke-dasharray="1.4 0.8"/><path d="M2.4 2.2V7.4M4.8 2.2V7.4" stroke="#c9c9c9" stroke-width="0.6"/></g>
<g transform="translate(476,18.6)" opacity="1.0"><path d="M0.4 2H2.6L3.4 0.8H5L5.6 2H7.4V7.4H0.4Z" fill="#fafafa" stroke="#8d8d8d" stroke-width="0.7"/></g>
<g transform="translate(487,18.6)" opacity="1.0"><rect x="0.4" y="0.8" width="6.8" height="6.8" fill="#f4ecd6" stroke="#a89a7a" stroke-width="0.6"/><rect x="4.2" y="1" width="2.8" height="6.4" fill="#d9c9a0"/><path d="M0.4 2.6H7.2" stroke="#a89a7a" stroke-width="0.5"/></g>
<g transform="translate(497,18.6)" opacity="1.0"><rect x="0.4" y="0.8" width="7" height="6.8" fill="#f2f2f2" stroke="#7d7d7d" stroke-width="0.7"/><path d="M3.8 0.8V7.6M0.4 3.2H7.4" stroke="#8d8d8d" stroke-width="0.6"/><rect x="4.4" y="3.8" width="2.4" height="3" fill="#d2d2d2"/></g>
<rect x="4.2" y="29.6" width="11" height="10.4" fill="#cfdff1"/>
<g transform="translate(6,30.4)" opacity="1.0"><path d="M1.4 0.6L2 7L3.8 5.4L5.4 8.4L6.8 7.6L5.2 4.8L7.4 4.4Z" fill="#f4f8fc" stroke="#3f6fa6" stroke-width="0.7"/></g>
<g transform="translate(16.5,30.4)" opacity="1.0"><path d="M0.2 3.4L2.6 0.4L5 3.4Z" fill="#b02a25"/><rect x="0.8" y="3.2" width="2.2" height="5" fill="#b02a25"/><path d="M3 4.4H6.2L7.6 8.2H3Z" fill="#c0392b"/><path d="M3.2 5.6H6.4M3.2 7H7" stroke="#1d3f63" stroke-width="0.8"/></g>
<g transform="translate(26.5,30.4)" opacity="1.0"><rect x="0.5" y="0.8" width="6" height="7.4" fill="#fbf5f6" stroke="#ecdde0" stroke-width="0.6"/></g>
<g transform="translate(38,30.4)" opacity="1.0"><rect x="0.5" y="2.8" width="7" height="3.6" fill="#f6f6f6" stroke="#e6e6e6" stroke-width="0.5"/></g>
<g transform="translate(48,30.4)" opacity="1.0"><path d="M0.8 7.6L7 1" stroke="#dcd0c8" stroke-width="0.9"/><path d="M6 0.6L7.6 2" stroke="#e7bcbc" stroke-width="0.8"/></g>
<g transform="translate(59,30.4)" opacity="1.0"><rect x="0.8" y="0.4" width="5" height="8" fill="#c6d6dc" stroke="#3d6a78" stroke-width="0.7"/><path d="M3.3 0.4V8.4" stroke="#1d3f63" stroke-width="0.9"/><path d="M2 3.4L3.3 4.6L4.6 3.4M2 6L3.3 4.8L4.6 6" stroke="#3d6a78" stroke-width="0.5" fill="none"/><circle cx="6.8" cy="8" r="0.4" fill="#555"/></g>
<g transform="translate(69.5,30.4)" opacity="1.0"><rect x="0.5" y="0.5" width="5.6" height="8" rx="1" fill="#2f5368" /><rect x="1.6" y="1.6" width="3.4" height="2.2" fill="#eef3f6"/><rect x="1.6" y="5" width="3.4" height="2.4" fill="#eef3f6"/></g>
<g transform="translate(79.5,30.4)" opacity="1.0"><path d="M0.4 2.2L2 0.6H7.6V8.2H0.4Z" fill="#5c6066"/><rect x="1.4" y="2.6" width="1.8" height="5" fill="#e6e8ea"/><rect x="4.4" y="2.6" width="2" height="5" fill="#e6e8ea"/><path d="M0.4 2.2H7.6" stroke="#eee" stroke-width="0.4"/></g>
<g transform="translate(90,30.4)" opacity="1.0"><rect x="0.4" y="0.4" width="6" height="8" rx="1.2" fill="#26505e"/><rect x="1.6" y="1.6" width="3.4" height="2" fill="#eef3f6"/><rect x="1.6" y="4.8" width="3.6" height="2.6" fill="#eef3f6"/><circle cx="7.2" cy="8" r="0.4" fill="#555"/></g>
<g transform="translate(102,30.4)" opacity="1.0"><path d="M1 7.4L5.4 2.6" stroke="#d3d3d3" stroke-width="0.7"/></g>
<g transform="translate(110.5,30.4)" opacity="1.0"><path d="M0.6 1H3V5H0.6Z" fill="#2f6f86"/><path d="M3.4 0.6V8M5.4 1.6L4 4.6H7.2L5.8 8" stroke="#17365a" stroke-width="1" fill="none"/><path d="M0.6 5.6H3V8H0.6Z" fill="#9fc3cf"/></g>
<g transform="translate(121.5,30.4)" opacity="1.0"><path d="M0 4.2L4.1 0.4L8.2 4.2Z" fill="#b52b27"/><rect x="1.4" y="4.2" width="5.4" height="3.8" fill="#f0e6e4"/><rect x="3" y="5" width="2.2" height="3" fill="#17365a"/><path d="M1 4.4L4.1 2.4L7.2 4.4" fill="none" stroke="#17365a" stroke-width="0.5"/></g>
<g transform="translate(131.5,30.4)" opacity="1.0"><path d="M0.8 8.2V3.4Q0.8 0.6 3.9 0.6Q7 0.6 7 3.4V8.2" fill="#f4f6f8" stroke="#17365a" stroke-width="1.1"/><path d="M2.4 8.2V4Q2.4 2.4 3.9 2.4Q5.4 2.4 5.4 4V8.2" fill="#fff" stroke="#5d7590" stroke-width="0.5"/></g>
<g transform="translate(142.5,30.4)" opacity="1.0"><path d="M0 4L4 0.6L8 4Z" fill="#dc8f8a"/><rect x="1.2" y="4" width="5.6" height="4.2" fill="#f3d9d6" stroke="#d99a96" stroke-width="0.4"/><rect x="3" y="5" width="2" height="3.2" fill="#dc8f8a"/></g>
<g transform="translate(153,30.4)" opacity="1.0"><path d="M0.4 3.4L4 1.4L7.6 3.4L4 5.8Z" fill="#f8fafc" stroke="#d3dbe6" stroke-width="0.6"/></g>
<g transform="translate(163,30.4)" opacity="1.0"><rect x="1" y="1" width="3.6" height="7" fill="#f7f7f7" stroke="#ebebeb" stroke-width="0.5"/></g>
<g transform="translate(172,30.4)" opacity="1.0"><rect x="1" y="1" width="5" height="7" fill="#f9f7f1" stroke="#efece2" stroke-width="0.5"/></g>
<g transform="translate(185,30.4)" opacity="1.0"><path d="M0.4 1.6L1.6 0.4H7.2V7L6 8.2H0.4Z" fill="#1d4a68"/><rect x="1.6" y="2.6" width="3.4" height="3.6" fill="#e6eef4"/><path d="M3.3 2.6V6.2" stroke="#1d4a68" stroke-width="0.5"/><circle cx="7.6" cy="8.2" r="0.4" fill="#555"/></g>
<path d="M195.5 30.5V39.5" stroke="#dcdcdc" stroke-width="0.6"/>
<g transform="translate(199.5,30.4)" opacity="1.0"><path d="M0.8 2.4L4 5.6L7.4 2.4" fill="none" stroke="#8496a6" stroke-width="1.7"/></g>
<g transform="translate(220,30.4)" opacity="1.0"><path d="M0.8 6L4 2.8L7.4 6" fill="none" stroke="#a0a0a0" stroke-width="1.7"/></g>
<path d="M232 30.5V39.5" stroke="#dcdcdc" stroke-width="0.6"/>
<g transform="translate(236,30.4)" opacity="1.0"><path d="M0.8 6L5.4 0.8L7.4 2.6L2.8 7.8L0.4 8.4Z" fill="#e9a545" stroke="#b9781e" stroke-width="0.4"/><path d="M2 4.8L4 6.6" stroke="#fff4d8" stroke-width="0.6"/><circle cx="7.6" cy="8.2" r="0.4" fill="#555"/></g>
<g transform="translate(247,30.4)" opacity="1.0"><path d="M4.6 0.6L1 8" stroke="#b52b27" stroke-width="1.2"/><path d="M4.4 0.6L7.6 8" stroke="#151515" stroke-width="1.2"/><path d="M2 5.4Q4.4 3.6 7 5.6" fill="none" stroke="#b52b27" stroke-width="0.6"/></g>
<g transform="translate(267,30.4)" opacity="1.0"><path d="M2.8 1.2H7.6V6.4H5" fill="none" stroke="#3f5f86" stroke-width="0.8"/><path d="M0.6 2.4Q0.4 0.6 2.2 0.6Q4 0.6 3.8 3L4.4 7.2H0.4Z" fill="#e9a24a"/><path d="M1.8 3.2L2.8 7" stroke="#8a5a1e" stroke-width="0.7"/></g>
<g transform="translate(279,30.4)" opacity="1.0"><path d="M0.6 0.8L7.6 8M7.6 0.8L0.6 8" stroke="#444" stroke-width="0.7"/></g>
<g transform="translate(289.5,30.4)" opacity="1.0"><path d="M0.4 8L7.6 0.6" stroke="#444" stroke-width="0.7"/><circle cx="8.2" cy="8.2" r="0.4" fill="#555"/></g>
<g transform="translate(299,30.4)" opacity="1.0"><path d="M0.8 8Q1.4 1.6 7.4 0.8" fill="none" stroke="#8a8a8a" stroke-width="0.8"/><path d="M5 0.6L7.6 0.8" stroke="#b9876a" stroke-width="0.9"/><circle cx="8.2" cy="8.2" r="0.4" fill="#555"/></g>
<g transform="translate(310,30.4)" opacity="1.0"><circle cx="3.6" cy="4" r="3.2" fill="#fafafa" stroke="#555" stroke-width="0.7"/><path d="M6 6.6L7.6 8.2" stroke="#555" stroke-width="0.7"/></g>
<g transform="translate(321,30.4)" opacity="1.0"><rect x="0.6" y="1" width="6.4" height="6.2" fill="#fafafa" stroke="#555" stroke-width="0.7"/><circle cx="7.8" cy="8.2" r="0.4" fill="#555"/></g>
<g transform="translate(331,30.4)" opacity="1.0"><path d="M0.4 7.4L2.6 3.6L4.4 5.6L7.6 1" fill="none" stroke="#666" stroke-width="0.8"/></g>
<g transform="translate(342,30.4)" opacity="1.0"><path d="M1 1.2H3M0.6 3.4H3.2M1 5.6H3" stroke="#3d6a78" stroke-width="0.9"/><path d="M4 0.6V8.2" stroke="#3d6a78" stroke-width="0.9"/><path d="M5 3L7 8.2H5Z" fill="#3d6a78"/><circle cx="5.8" cy="1.6" r="0.9" fill="#3d6a78"/></g>
<g transform="translate(352,30.4)" opacity="1.0"><rect x="0.6" y="0.8" width="6.6" height="7" fill="#fafafa" stroke="#8a8a8a" stroke-width="0.7"/><path d="M0.6 4.2H7.2" stroke="#8a8a8a" stroke-width="0.7"/></g>
<path d="M738.6 42V264" stroke="#c9c9c9" stroke-width="0.5" stroke-dasharray="0.7 0.9"/>
<g transform="translate(740.2,45.4)" opacity="1.0"><circle cx="3.4" cy="3" r="2.8" fill="#fdfdfd" stroke="#8d8d8d" stroke-width="0.7"/><path d="M4.6 3.6L7.8 5L6.2 5.6L7.2 7.4" fill="none" stroke="#444" stroke-width="0.7"/></g>
<g transform="translate(740.2,55.4)" opacity="1.0"><circle cx="3" cy="3" r="2.4" fill="#f2f6fa" stroke="#1d3f63" stroke-width="1"/><path d="M4.8 4.8L7.6 7.6" stroke="#1d3f63" stroke-width="1.3"/><path d="M1.8 3H4.2M3 1.8V4.2" stroke="#1d3f63" stroke-width="0.6"/></g>
<g transform="translate(740.2,66.4)" opacity="1.0"><circle cx="3" cy="3" r="2.4" fill="#f2f6fa" stroke="#1d3f63" stroke-width="1"/><path d="M4.8 4.8L7.6 7.6" stroke="#1d3f63" stroke-width="1.3"/><path d="M1.8 3H4.2" stroke="#1d3f63" stroke-width="0.6"/></g>
<g transform="translate(740.2,76.6)" opacity="1.0"><path d="M2.4 1.2Q6.6 0.2 6.8 4.4Q6.4 6.6 4 6.6" fill="none" stroke="#777" stroke-width="0.7"/><rect x="0.6" y="4.6" width="2.2" height="2.2" fill="#eee" stroke="#555" stroke-width="0.5"/></g>
<g transform="translate(740.2,86.2)" opacity="1.0"><rect x="0.4" y="0.4" width="7.6" height="8" fill="#dfeeee" stroke="#4f8b8b" stroke-width="0.8"/><path d="M1.4 1.6L7 7.4M7 1.6L1.4 7.4" stroke="#6fa5a5" stroke-width="0.8"/></g>
<g transform="translate(740.2,96.6)" opacity="1.0"><rect x="0.4" y="0.4" width="7.6" height="8" fill="#e6f2f2" stroke="#4f8b8b" stroke-width="0.8"/><path d="M1.2 1.2L3 1.2L1.2 3ZM7.2 1.2L5.4 1.2L7.2 3ZM1.2 7.6L3 7.6L1.2 5.8ZM7.2 7.6L5.4 7.6L7.2 5.8Z" fill="#2f6a6a"/></g>
<g transform="translate(740.2,106.4)" opacity="1.0"><rect x="0.4" y="0.4" width="7.6" height="7.6" fill="#e6f2f2" stroke="#4f8b8b" stroke-width="0.8"/><rect x="0.4" y="0.4" width="7.6" height="1.8" fill="#1d3f63"/><path d="M2 6.8V4.4L4.2 3L6.4 4.4V6.8Z" fill="#f4f8f8" stroke="#4f8b8b" stroke-width="0.5"/></g>
<g transform="translate(740.2,118)" opacity="1.0"><path d="M2 1Q4 3 2.4 6.6" fill="none" stroke="#e3e3e3" stroke-width="0.8"/></g>
<g transform="translate(740.2,127.5)" opacity="1.0"><path d="M2 1Q0.8 4 3 7M5 1.4L5.6 3" fill="none" stroke="#e6dada" stroke-width="0.8"/></g>
<g transform="translate(740.2,137.4)" opacity="1.0"><rect x="0.8" y="0.6" width="6.4" height="7" fill="#f4f4f4" stroke="#777" stroke-width="0.7"/><rect x="2.4" y="2.6" width="3.6" height="3.6" fill="#e0e0e0" stroke="#888" stroke-width="0.4"/></g>
<rect x="739.4" y="151.6" width="10.2" height="10.4" fill="#d5e1ef"/>
<g transform="translate(740.2,152.6)" opacity="1.0"><path d="M0.4 7.8V4L3.6 0.6L5.2 2.4" fill="#f2df8e" stroke="#a89030" stroke-width="0.5"/><path d="M3.6 0.6L7.6 4.2V7.8H3.6Z" fill="#17365a"/><rect x="0.4" y="5.6" width="3.4" height="2.2" fill="#f6e9a8"/><path d="M4.4 4.2H6.8M4.4 5.8H6.8" stroke="#e8eef6" stroke-width="0.5"/></g>
<g transform="translate(740.2,163.4)" opacity="1.0"><path d="M0.4 1.4H8" stroke="#17365a" stroke-width="1.4"/><path d="M0.4 4.4H8M1.6 4.4V7.4M4.2 4.4V7.4M6.8 4.4V7.4" stroke="#17365a" stroke-width="0.7"/></g>
<g transform="translate(740.2,174)" opacity="1.0"><rect x="1" y="0.6" width="6" height="7" fill="#fafafa" stroke="#17365a" stroke-width="0.8"/></g>
<g transform="translate(740.2,184.6)" opacity="1.0"><path d="M1 0.6H7.2V5.4L5 7.8H1Z" fill="#fafcff" stroke="#3f6fa6" stroke-width="0.7"/><path d="M7.2 5.4H5V7.8" fill="none" stroke="#3f6fa6" stroke-width="0.6"/><circle cx="4" cy="3.6" r="1" fill="none" stroke="#8aa" stroke-width="0.5"/></g>
<rect x="739.4" y="193.6" width="10.2" height="21.4" fill="#cfdff1"/>
<g transform="translate(740.2,194.6)" opacity="1.0"><path d="M0.6 1H3.2L1 4.4H3.6" fill="none" stroke="#17365a" stroke-width="0.9"/><path d="M7.6 0.6L2 8" stroke="#17365a" stroke-width="0.9"/><circle cx="6.4" cy="6" r="1.6" fill="none" stroke="#17365a" stroke-width="0.8"/></g>
<g transform="translate(740.2,205.4)" opacity="1.0"><path d="M1.6 0.6V8M0.4 3.4H3" stroke="#17365a" stroke-width="0.9"/><path d="M4 2H7.6M4 4.4H7.6M4 6.8H7.6" stroke="#2f5f86" stroke-width="0.9"/><path d="M5.6 2V6.8" stroke="#2f5f86" stroke-width="0.6"/></g>
<g transform="translate(740.2,216.4)" opacity="1.0"><path d="M1 1.2Q3.4 2 2.6 4.4M6.8 1Q7.4 6.8 1.4 7.4" fill="none" stroke="#17365a" stroke-width="1"/></g>
<g transform="translate(740.2,226.4)" opacity="1.0"><rect x="0.6" y="0.6" width="7.2" height="7.4" fill="#c6d3d6" stroke="#8ea3a8" stroke-width="0.4"/><path d="M3 0.6V8M5.4 0.6V8M0.6 3H7.8M0.6 5.4H7.8" stroke="#eef3f4" stroke-width="0.6"/></g>
<g transform="translate(740.2,233.6)" opacity="1.0"><path d="M1.4 1.4H2.8V2.8H1.4ZM3.8 1.4H5.2V2.8H3.8ZM6.2 1.4H7.6V2.8H6.2ZM1.4 4H2.8V5.4H1.4ZM3.8 4H5.2V5.4H3.8ZM6.2 4H7.6V5.4H6.2ZM1.4 6.6H2.8V8H1.4ZM3.8 6.6H5.2V8H3.8ZM6.2 6.6H7.6V8H6.2Z" fill="#6a6458"/></g>
<rect x="739.4" y="243.6" width="10.2" height="20.4" fill="#cfdff1"/>
<g transform="translate(740.2,244.6)" opacity="1.0"><path d="M0.6 1.4H4V4H0.6Z" fill="#17365a"/><path d="M4.6 0.6L7.8 3.8V8H4.6Z" fill="#2f5f96"/><path d="M0.6 5H3.6V8H0.6Z" fill="#5d86b6"/><path d="M5.4 4.6H7M5.4 6.2H7" stroke="#e8eef6" stroke-width="0.5"/></g>
<g transform="translate(740.2,255)" opacity="1.0"><path d="M1 0.6V8H7.6" fill="none" stroke="#5d7fa6" stroke-width="0.8"/><path d="M2.6 6.4L4 3.4L5.4 5L7 2" fill="none" stroke="#8aa3c6" stroke-width="0.7"/><rect x="4.6" y="4.6" width="2.6" height="2.6" fill="#9db3d0"/></g>
<g transform="translate(6.2,380.6)"><circle r="2.5" fill="none" stroke="#222" stroke-width="1.5"/><path d="M0 -4V4M-4 0H4M-2.8 -2.8L2.8 2.8M-2.8 2.8L2.8 -2.8" stroke="#222" stroke-width="1.3"/><circle r="1.3" fill="#f0f0f0"/></g>
<path d="M732.6 63L734.3 61L736 63" fill="none" stroke="#555" stroke-width="0.6"/>
<path d="M732.6 375.4L734.3 377.2L736 375.4Z" fill="#444"/>
<path d="M24.2 380.8L22.6 382.3L24.2 383.8Z" fill="#444"/>
<path d="M726.4 380.8L728 382.3L726.4 383.8Z" fill="#444"/>
<path d="M738 2.2L741.8 6M741.8 2.2L738 6" stroke="#333" stroke-width="0.7"/>
<path d="M7.6 43.1H9.3V45.1H7.6ZM7 45.3H9.9M8.4 45.3V46.6" fill="#444" stroke="#222" stroke-width="0.6"/>
<path d="M13.7 43.3L16 45.6M16 43.3L13.7 45.6" stroke="#222" stroke-width="0.8"/>
</svg>
<div class="t" style="left:105.4px;top:20.9px;font-size:4.0px;color:#444;">Section View Set</div><div class="t" style="left:157.2px;top:20.8px;font-size:4.2px;color:#444;">1/4&quot; Scale Annotations</div><div class="t" style="left:278.4px;top:17.6px;font-size:10px;font-weight:bold;color:#17365a;">?</div><div class="t" style="left:429.6px;top:18px;font-size:9.5px;font-weight:bold;color:#9a1f2e;">S</div><div class="t" style="left:212.8px;top:31.6px;font-size:6.5px;color:#555;">1</div><div class="t" style="left:258.6px;top:29.4px;font-size:10px;font-family:'Liberation Serif',serif;color:#2d566a;">T<span style="font-size:6px;color:#444">.</span></div>
</body></html>
